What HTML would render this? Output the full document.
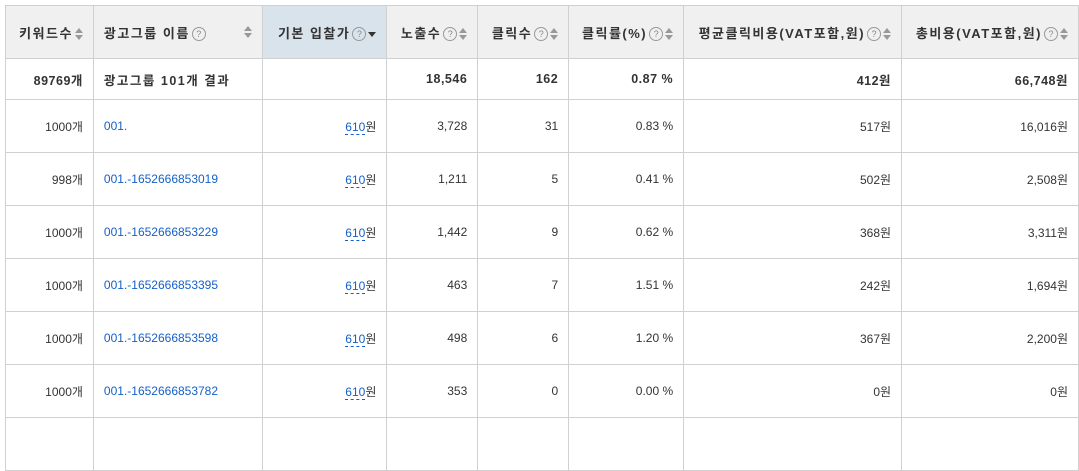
<!DOCTYPE html>
<html><head><meta charset="utf-8"><style>
body{margin:0;background:#fff;width:1079px;height:424px;overflow:hidden;font-family:"Liberation Sans","Noto Sans CJK KR",sans-serif;}
table{position:absolute;left:5px;top:5px;border-collapse:collapse;table-layout:fixed;}
td,th{border:1px solid #d0d0d0;padding:0 10px;font-size:12px;color:#333;white-space:nowrap;overflow:hidden}
th{background:#f0f0f0;height:52px;font-size:13px;font-weight:bold;text-align:left;letter-spacing:1.5px}
th.r{text-align:right}
th.sel{background:#d8e3ec}
tr.sum td{height:40px;font-weight:bold;font-size:12.5px;letter-spacing:.5px}
tr.d td{height:52px}
td{text-align:right}
td.l{text-align:left}
a{color:#1560c8;text-decoration:none}
.q{display:inline-block;width:12px;height:12px;border:1px solid #999;border-radius:50%;font-size:9px;line-height:12px;text-align:center;color:#888;font-weight:normal;vertical-align:middle;letter-spacing:0;margin-left:2px}
.s{display:inline-block;width:8px;height:12px;vertical-align:middle;margin-left:2px;position:relative}
.s:before{content:"";position:absolute;left:0;top:0;border:4px solid transparent;border-bottom:5px solid #999;border-top:0}
.s:after{content:"";position:absolute;left:0;bottom:0;border:4px solid transparent;border-top:5px solid #999;border-bottom:0}
.dn{display:inline-block;border:4px solid transparent;border-top:5px solid #333;border-bottom:0;vertical-align:middle;margin-left:2px}
.u{border-bottom:1px dashed #1560c8;color:#1560c8}
</style></head><body>
<table>
<colgroup><col style="width:88px"><col style="width:170px"><col style="width:124px"><col style="width:91px"><col style="width:91px"><col style="width:115px"><col style="width:218px"><col style="width:177px"></colgroup>
<tr><th class="r">키워드수<span class="s"></span></th><th>광고그룹 이름<span class="q">?</span><span class="s" style="float:right;margin-top:3px"></span></th><th class="sel" style="text-align:right">기본 입찰가<span class="q">?</span><span class="dn"></span></th><th class="r">노출수<span class="q">?</span><span class="s"></span></th><th class="r">클릭수<span class="q">?</span><span class="s"></span></th><th class="r">클릭률(%)<span class="q">?</span><span class="s"></span></th><th class="r">평균클릭비용(VAT포함,원)<span class="q">?</span><span class="s"></span></th><th class="r">총비용(VAT포함,원)<span class="q">?</span><span class="s"></span></th></tr>
<tr class="sum"><td>89769개</td><td class="l" style="letter-spacing:1.5px">광고그룹 101개 결과</td><td></td><td>18,546</td><td>162</td><td>0.87 %</td><td>412원</td><td>66,748원</td></tr>
<tr class="d"><td>1000개</td><td class="l"><a>001.</a></td><td><span class="u">610</span>원</td><td>3,728</td><td>31</td><td>0.83 %</td><td>517원</td><td>16,016원</td></tr>
<tr class="d"><td>998개</td><td class="l"><a>001.-1652666853019</a></td><td><span class="u">610</span>원</td><td>1,211</td><td>5</td><td>0.41 %</td><td>502원</td><td>2,508원</td></tr>
<tr class="d"><td>1000개</td><td class="l"><a>001.-1652666853229</a></td><td><span class="u">610</span>원</td><td>1,442</td><td>9</td><td>0.62 %</td><td>368원</td><td>3,311원</td></tr>
<tr class="d"><td>1000개</td><td class="l"><a>001.-1652666853395</a></td><td><span class="u">610</span>원</td><td>463</td><td>7</td><td>1.51 %</td><td>242원</td><td>1,694원</td></tr>
<tr class="d"><td>1000개</td><td class="l"><a>001.-1652666853598</a></td><td><span class="u">610</span>원</td><td>498</td><td>6</td><td>1.20 %</td><td>367원</td><td>2,200원</td></tr>
<tr class="d"><td>1000개</td><td class="l"><a>001.-1652666853782</a></td><td><span class="u">610</span>원</td><td>353</td><td>0</td><td>0.00 %</td><td>0원</td><td>0원</td></tr>
<tr class="d"><td></td><td></td><td></td><td></td><td></td><td></td><td></td><td></td></tr>
</table>
</body></html>
